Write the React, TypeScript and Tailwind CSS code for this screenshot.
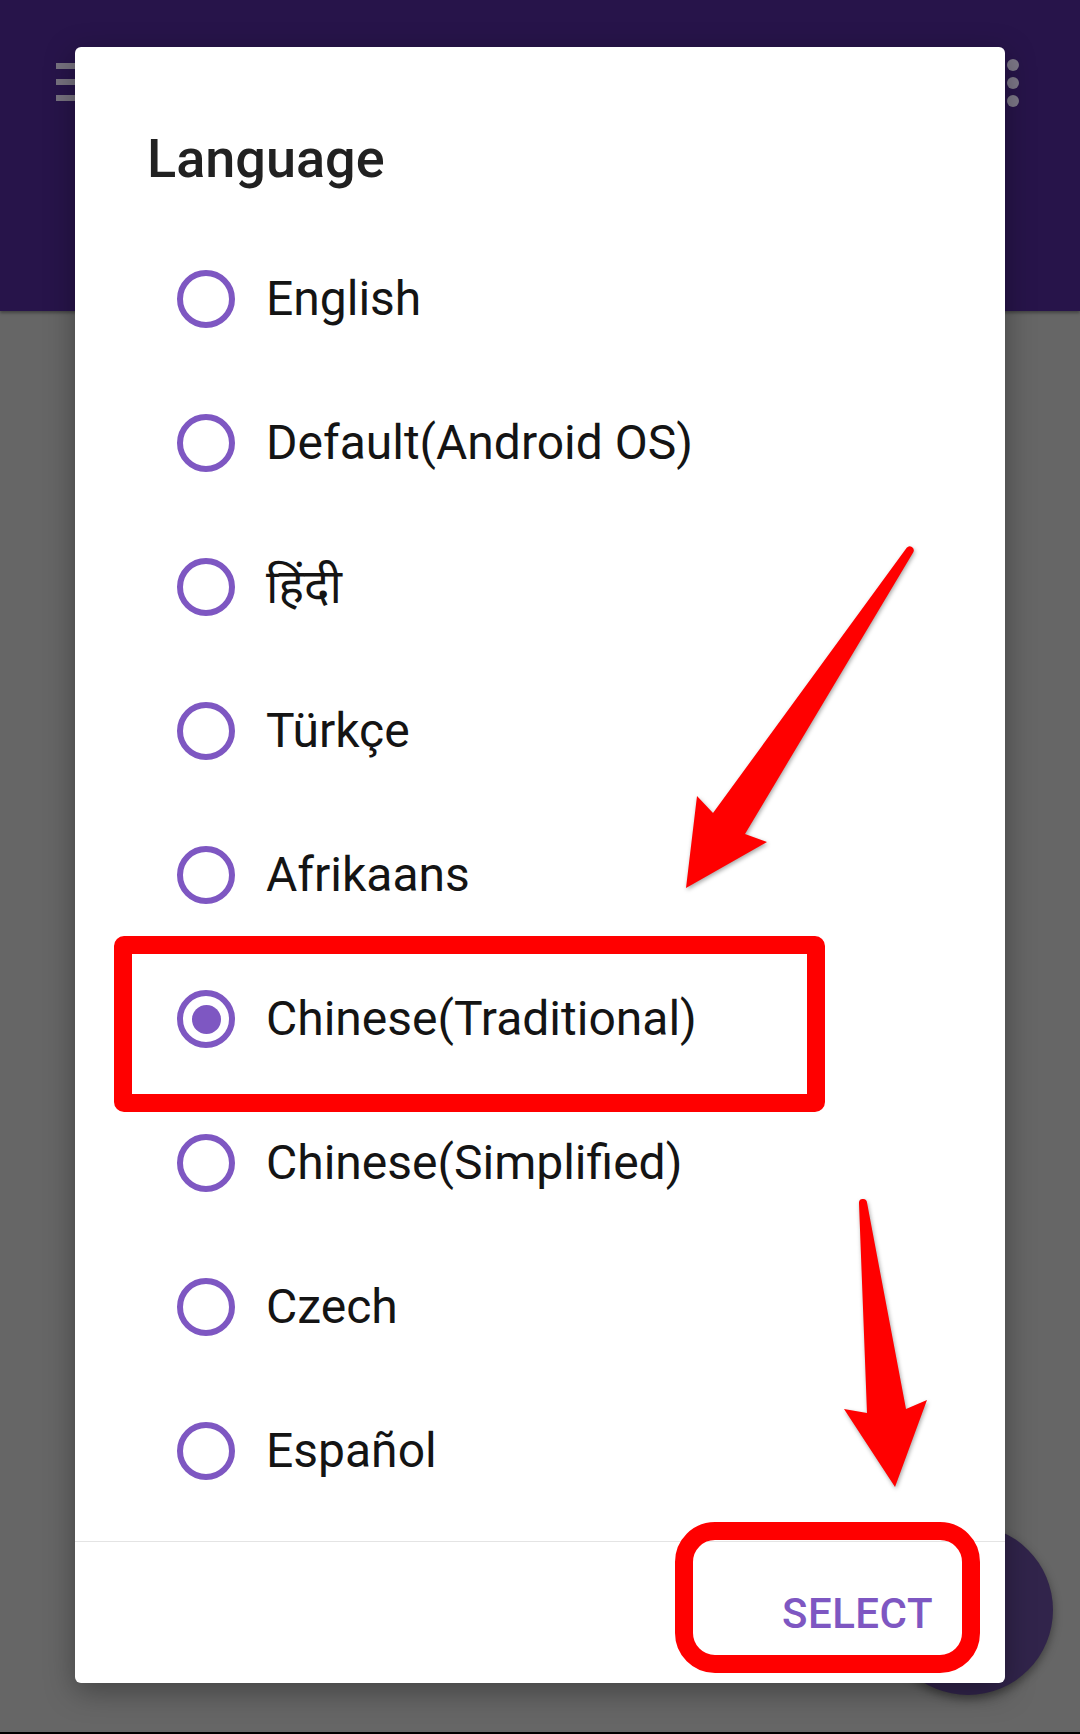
import React, { useState } from 'react';

const languages = [
  'English',
  'Default(Android OS)',
  'हिंदी',
  'Türkçe',
  'Afrikaans',
  'Chinese(Traditional)',
  'Chinese(Simplified)',
  'Czech',
  'Español',
];

const Radio = ({ checked }: { checked: boolean }) => (
  <span className="flex items-center justify-center w-[58px] h-[58px] rounded-full border-[6px] border-[#7e57c2] shrink-0">
    {checked && <span className="w-[29px] h-[29px] rounded-full bg-[#7e57c2]" />}
  </span>
);

const App = () => {
  const [selected, setSelected] = useState('Chinese(Traditional)');

  return (
    <div className="relative w-[1080px] h-[1734px] flex flex-col bg-[#666666] overflow-hidden font-['Roboto','Noto_Sans',sans-serif]">
      {/* app bar (dimmed behind the dialog) */}
      <div className="h-[311px] bg-[#27144a] flex justify-between pt-[63px] pl-[56px] pr-[61px] shadow-[0_2px_3px_rgba(0,0,0,0.35)]">
        <div className="flex flex-col gap-[10px]">
          <span className="block w-[24px] h-[6px] bg-[#77727f]" />
          <span className="block w-[24px] h-[6px] bg-[#77727f]" />
          <span className="block w-[24px] h-[6px] bg-[#77727f]" />
        </div>
        <div className="flex flex-col gap-[6px] -mt-[4px]">
          <span className="block w-[12px] h-[12px] rounded-full bg-[#7d7888]" />
          <span className="block w-[12px] h-[12px] rounded-full bg-[#7d7888]" />
          <span className="block w-[12px] h-[12px] rounded-full bg-[#7d7888]" />
        </div>
      </div>
      <div className="flex-1" />
      <div className="h-[2px] bg-black" />

      {/* FAB behind the dialog */}
      <div className="absolute left-[883px] top-[1525px] w-[170px] h-[170px] rounded-full bg-[#31244b] shadow-[0_4px_10px_rgba(0,0,0,0.4)]" />

      {/* dialog */}
      <div className="absolute left-[75px] top-[47px] w-[930px] h-[1636px] bg-white rounded-[6px] flex flex-col shadow-[0_8px_30px_rgba(0,0,0,0.35)]">
        <div className="pt-[80px] pl-[72px] text-[54px] leading-[64px] font-medium text-[#212121]">Language</div>

        <ul className="mt-[36px]">
          {languages.map((lang) => (
            <li
              key={lang}
              className="h-[144px] flex items-center pl-[102px] gap-[31px] cursor-pointer"
              onClick={() => setSelected(lang)}
            >
              <Radio checked={selected === lang} />
              <span className="text-[48px] text-[#141414] font-['Roboto','Noto_Sans','Noto_Sans_Devanagari',sans-serif]">{lang}</span>
            </li>
          ))}
        </ul>

        <div className="mt-[18px] h-px bg-[#e4e4e4]" />
        <div className="flex-1 flex items-center justify-end pr-[72px] pt-[2px]">
          <button className="text-[42px] leading-none font-medium text-[#7e57c2] tracking-[0.5px]">SELECT</button>
        </div>
      </div>

      {/* annotations */}
      <div className="absolute left-[114px] top-[936px] w-[711px] h-[176px] border-[18px] border-[#ff0000] rounded-[10px]" />
      <div className="absolute left-[675px] top-[1522px] w-[305px] h-[151px] border-[18px] border-[#ff0000] rounded-[40px]" />

      <svg className="absolute left-0 top-0 drop-shadow-[1px_2px_2px_rgba(0,0,0,0.35)]" width="1080" height="1734" viewBox="0 0 1080 1734">
        <path
          d="M906.7 547.8 L713 813 L697 796 L686 888 L767 842 L745 834 L913.3 552.2 A4 4 0 0 0 906.7 547.8 Z"
          fill="#ff0000"
        />
        <path
          d="M859 1203.4 L867 1413 L844 1409 L895 1487 L927 1400 L906 1409 L867 1202.6 A4 4 0 0 0 859 1203.4 Z"
          fill="#ff0000"
        />
      </svg>
    </div>
  );
};

export default App;
